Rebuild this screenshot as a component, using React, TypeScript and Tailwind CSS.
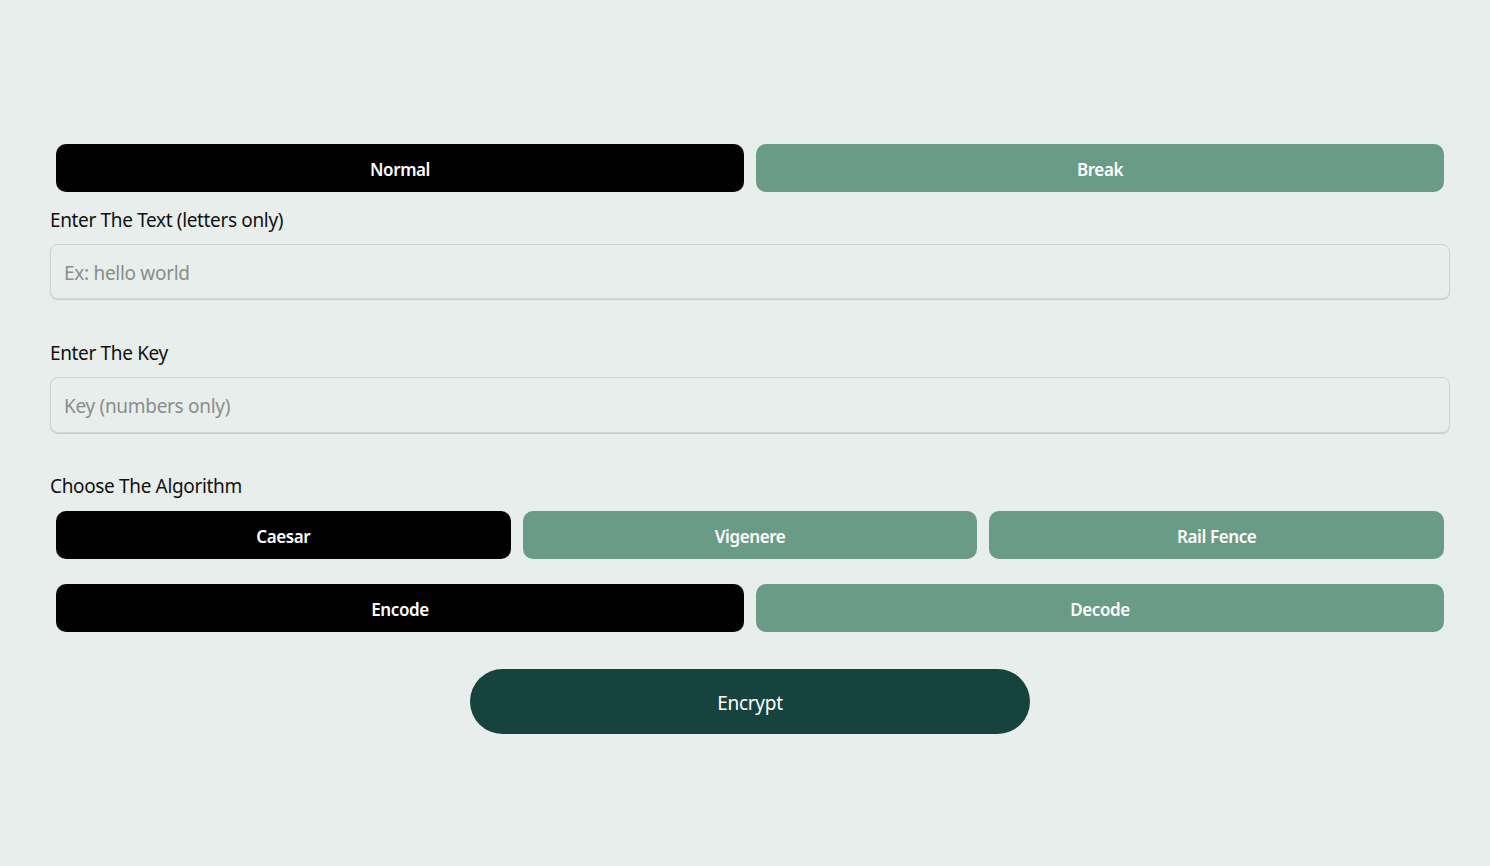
import React from "react";

const font = { fontFamily: '"Segoe UI", "Noto Sans", "Open Sans", sans-serif' };

function Btn({ label, active }: { label: string; active?: boolean }) {
  return (
    <button
      className={
        "mx-[6px] h-[48px] flex-1 rounded-[10px] pt-[3px] text-[17px] font-semibold tracking-[-0.4px] text-white " +
        (active ? "bg-black" : "bg-[#6a9b87]")
      }
    >
      {label}
    </button>
  );
}

export default function App() {
  return (
    <div className="min-h-[866px] w-full bg-[#e8eeeb] text-[#111]" style={font}>
      <div className="ml-[50px] w-[1400px] pt-[144px]">
        <div className="flex">
          <Btn label="Normal" active />
          <Btn label="Break" />
        </div>
        <div className="mt-[14px] text-[19px] leading-[28px] tracking-[-0.35px] text-[#111]">Enter The Text (letters only)</div>
        <input
          className="mt-[10px] block h-[55px] w-full rounded-[8px] border border-[#cfd3d1] bg-transparent px-[13px] pt-[2px] text-[19px] tracking-[-0.3px] shadow-[0_1px_1px_rgba(0,0,0,0.15)] outline-none placeholder:text-[#8a8d8c]"
          placeholder="Ex: hello world"
        />
        <div className="mt-[40px] text-[19px] leading-[28px] tracking-[-0.35px]">Enter The Key</div>
        <input
          className="mt-[10px] block h-[56px] w-full rounded-[8px] border border-[#cfd3d1] bg-transparent px-[13px] pt-[2px] text-[19px] tracking-[-0.3px] shadow-[0_1px_1px_rgba(0,0,0,0.15)] outline-none placeholder:text-[#8a8d8c]"
          placeholder="Key (numbers only)"
        />
        <div className="mt-[39px] text-[19px] leading-[28px] tracking-[-0.35px]">Choose The Algorithm</div>
        <div className="mt-[11px] flex">
          <Btn label="Caesar" active />
          <Btn label="Vigenere" />
          <Btn label="Rail Fence" />
        </div>
        <div className="mt-[25px] flex">
          <Btn label="Encode" active />
          <Btn label="Decode" />
        </div>
        <div className="mt-[37px] flex justify-center">
          <button className="h-[65px] w-[560px] rounded-full bg-[#17433e] pt-[3px] text-[19px] tracking-[-0.3px] text-white">Encrypt</button>
        </div>
      </div>
    </div>
  );
}
